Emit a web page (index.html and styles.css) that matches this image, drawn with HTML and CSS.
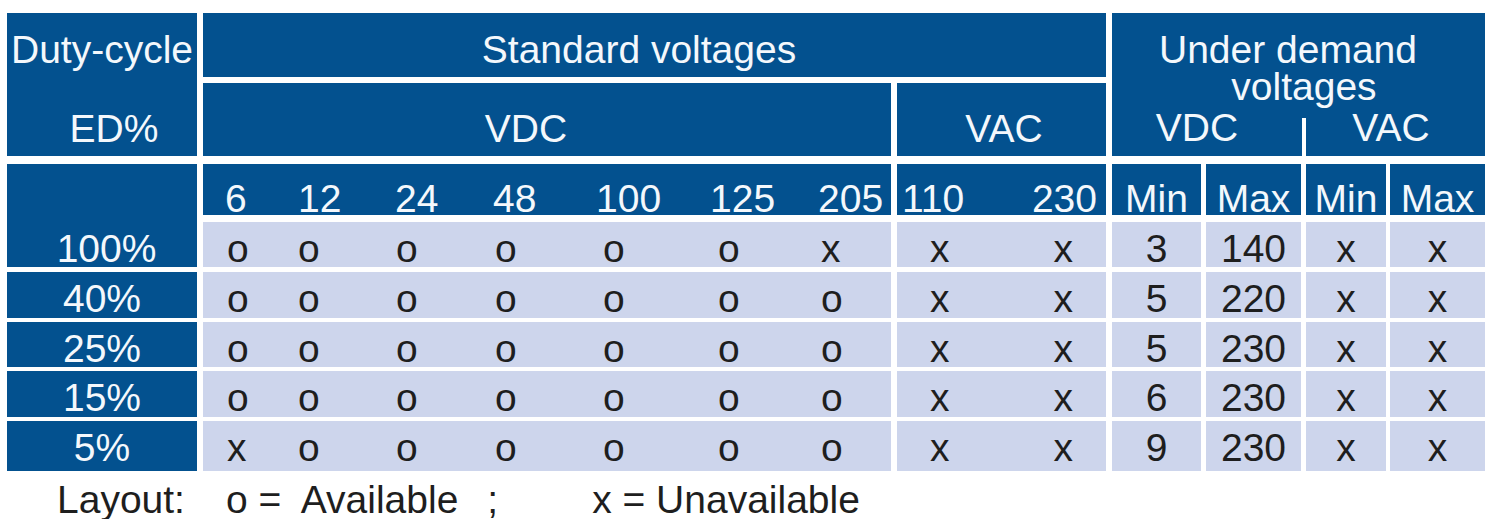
FILE: index.html
```html
<!DOCTYPE html>
<html lang="en">
<head>
<meta charset="utf-8">
<title>Duty-cycle and voltages</title>
<link rel="stylesheet" href="styles.css">
</head>
<body>
<main class="page">
  <div class="grid">
    <div class="row rh1">
      <div class="cell hd duty-head m6">
        <span class="dh-l1">Duty-cycle</span>
        <span class="dh-l2">ED%</span>
      </div>
      <div class="cell hd std-head m6">Standard voltages</div>
      <div class="cell hd ud-head">
        <span class="ud-l1">Under demand</span>
        <span class="ud-l2">voltages</span>
        <div class="ud-split">
          <span class="ud-dc">VDC</span>
          <span class="ud-ac">VAC</span>
        </div>
      </div>
    </div>
    <div class="row rh2">
      <div class="cell hd vdc-head m6">VDC</div>
      <div class="cell hd vac-head m6">VAC</div>
    </div>
    <div class="row rnum">
      <div class="cell hd duty-first m6">100%</div>
      <div class="cell hd num first">6</div>
      <div class="cell hd num">12</div>
      <div class="cell hd num">24</div>
      <div class="cell hd num">48</div>
      <div class="cell hd num">100</div>
      <div class="cell hd num">125</div>
      <div class="cell hd num m6">205</div>
      <div class="cell hd num hac1">110</div>
      <div class="cell hd num hac2 m6">230</div>
      <div class="cell hd num c m5">Min</div>
      <div class="cell hd num c m5">Max</div>
      <div class="cell hd num c m4">Min</div>
      <div class="cell hd num c">Max</div>
    </div>
    <div class="row r1">
      <div class="cell dt first">o</div>
      <div class="cell dt p0">o</div>
      <div class="cell dt p1">o</div>
      <div class="cell dt p2">o</div>
      <div class="cell dt p7">o</div>
      <div class="cell dt p8">o</div>
      <div class="cell dt p3 m6">x</div>
      <div class="cell dt ac1">x</div>
      <div class="cell dt ac2 m6">x</div>
      <div class="cell dt c m5">3</div>
      <div class="cell dt c m5">140</div>
      <div class="cell dt c m4">x</div>
      <div class="cell dt c">x</div>
    </div>
    <div class="row r2">
      <div class="cell hd duty m6">40%</div>
      <div class="cell dt first">o</div>
      <div class="cell dt p0">o</div>
      <div class="cell dt p1">o</div>
      <div class="cell dt p2">o</div>
      <div class="cell dt p7">o</div>
      <div class="cell dt p8">o</div>
      <div class="cell dt p3 m6">o</div>
      <div class="cell dt ac1">x</div>
      <div class="cell dt ac2 m6">x</div>
      <div class="cell dt c m5">5</div>
      <div class="cell dt c m5">220</div>
      <div class="cell dt c m4">x</div>
      <div class="cell dt c">x</div>
    </div>
    <div class="row r3">
      <div class="cell hd duty m6">25%</div>
      <div class="cell dt first">o</div>
      <div class="cell dt p0">o</div>
      <div class="cell dt p1">o</div>
      <div class="cell dt p2">o</div>
      <div class="cell dt p7">o</div>
      <div class="cell dt p8">o</div>
      <div class="cell dt p3 m6">o</div>
      <div class="cell dt ac1">x</div>
      <div class="cell dt ac2 m6">x</div>
      <div class="cell dt c m5">5</div>
      <div class="cell dt c m5">230</div>
      <div class="cell dt c m4">x</div>
      <div class="cell dt c">x</div>
    </div>
    <div class="row r4">
      <div class="cell hd duty m6">15%</div>
      <div class="cell dt first">o</div>
      <div class="cell dt p0">o</div>
      <div class="cell dt p1">o</div>
      <div class="cell dt p2">o</div>
      <div class="cell dt p7">o</div>
      <div class="cell dt p8">o</div>
      <div class="cell dt p3 m6">o</div>
      <div class="cell dt ac1">x</div>
      <div class="cell dt ac2 m6">x</div>
      <div class="cell dt c m5">6</div>
      <div class="cell dt c m5">230</div>
      <div class="cell dt c m4">x</div>
      <div class="cell dt c">x</div>
    </div>
    <div class="row r5">
      <div class="cell hd duty m6">5%</div>
      <div class="cell dt first">x</div>
      <div class="cell dt p0">o</div>
      <div class="cell dt p1">o</div>
      <div class="cell dt p2">o</div>
      <div class="cell dt p7">o</div>
      <div class="cell dt p8">o</div>
      <div class="cell dt p3 m6">o</div>
      <div class="cell dt ac1">x</div>
      <div class="cell dt ac2 m6">x</div>
      <div class="cell dt c m5">9</div>
      <div class="cell dt c m5">230</div>
      <div class="cell dt c m4">x</div>
      <div class="cell dt c">x</div>
    </div>
  </div>
  <p class="legend">
    <span>Layout:</span>
    <span class="key-o">o =  Available</span>
    <span class="key-sep">;</span>
    <span class="key-x">x = Unavailable</span>
  </p>
</main>
</body>
</html>
```

FILE: styles.css
```css
* { box-sizing: border-box; }

html, body {
  margin: 0;
  background: #ffffff;
}

body {
  font-family: "Liberation Sans", Arial, sans-serif;
  font-size: 39px;
  color: #1e1e1e;
}

.page {
  padding: 13px 0 0 7px;
}

.grid {
  display: grid;
  width: 1478px;
  grid-template-columns: 196px 95px 97px 98px 103px 114px 108px 79px 104px 111px 94px 100px 84px 95px;
  grid-template-rows: 70px 81px 58px 50px 50px 49px 50px 50px;
}

.row { display: contents; }

.cell {
  display: flex;
  min-width: 0;
  white-space: nowrap;
}

.hd {
  background: #03518f;
  color: #f4f8fc;
}

.dt {
  background: #cdd5ec;
  color: #1e1e1e;
  align-items: flex-start;
  padding-top: 8px;
  line-height: 37px;
}

/* right-hand gaps */
.m6 { margin-right: 6px; }
.m5 { margin-right: 5px; }
.m4 { margin-right: 4px; }

/* bottom gaps per row */
.rh1 > .cell { margin-bottom: 6px; }
.rh1 > .duty-head,
.rh1 > .ud-head { margin-bottom: 8px; }
.rh2 > .cell { margin-bottom: 8px; }
.rnum > .cell { margin-bottom: 7px; }
.rnum > .duty-first { margin-bottom: 5px; }
.r1 > .cell { margin-bottom: 5px; }
.r2 > .cell,
.r3 > .cell,
.r4 > .cell { margin-bottom: 4px; }

/* header blocks */
.duty-head {
  grid-row: span 2;
  flex-direction: column;
  align-items: center;
  padding-top: 17px;
  line-height: 39px;
}
.dh-l2 {
  margin-top: 40px;
  padding-left: 24px;
}

.std-head {
  grid-column: span 9;
  justify-content: center;
  padding: 17px 31px 0 0;
  line-height: 39px;
}

.ud-head {
  grid-column: span 4;
  grid-row: span 2;
  flex-direction: column;
  align-items: center;
  padding-top: 18px;
  line-height: 37px;
}
.ud-l1 { padding-right: 21px; }
.ud-l2 { padding-left: 11px; }
.ud-split {
  margin-top: auto;
  align-self: stretch;
  display: flex;
  height: 38px;
  line-height: 20px;
}
.ud-dc {
  width: 190px;
  text-align: center;
  padding-right: 20px;
}
.ud-ac {
  flex: 1;
  text-align: center;
  border-left: 4px solid #ffffff;
  padding-right: 9px;
}

.vdc-head {
  grid-column: span 7;
  justify-content: center;
  padding: 26px 42px 0 0;
  line-height: 39px;
}
.vac-head {
  grid-column: span 2;
  justify-content: center;
  padding: 26px 0 0 5px;
  line-height: 39px;
}

/* voltage number row */
.num {
  align-items: flex-end;
  line-height: 32px;
}
.num.first { padding-left: 22px; }
.hac1 { padding-left: 5px; }
.hac2 { justify-content: flex-end; padding-right: 9px; }

/* duty cycle column */
.duty-first {
  grid-row: span 2;
  align-items: flex-end;
  justify-content: center;
  line-height: 37px;
  padding-left: 9px;
}
.duty {
  align-items: flex-start;
  justify-content: center;
  padding-top: 8px;
  line-height: 37px;
}

/* data alignment (standard VDC columns) */
.dt.first { padding-left: 24px; }
.p0 { padding-left: 0; }
.p1 { padding-left: 1px; }
.p2 { padding-left: 2px; }
.p3 { padding-left: 3px; }
.p7 { padding-left: 7px; }
.p8 { padding-left: 8px; }
.ac1 { padding-left: 33px; }
.ac2 { justify-content: flex-end; padding-right: 33px; }
.c { justify-content: center; }

/* legend */
.legend {
  display: flex;
  margin: 9px 0 0 50px;
  line-height: 39px;
  color: #1e1e1e;
  white-space: pre;
}
.key-o { margin-left: 41px; }
.key-sep { margin-left: 29px; }
.key-x { margin-left: 94px; }
```
